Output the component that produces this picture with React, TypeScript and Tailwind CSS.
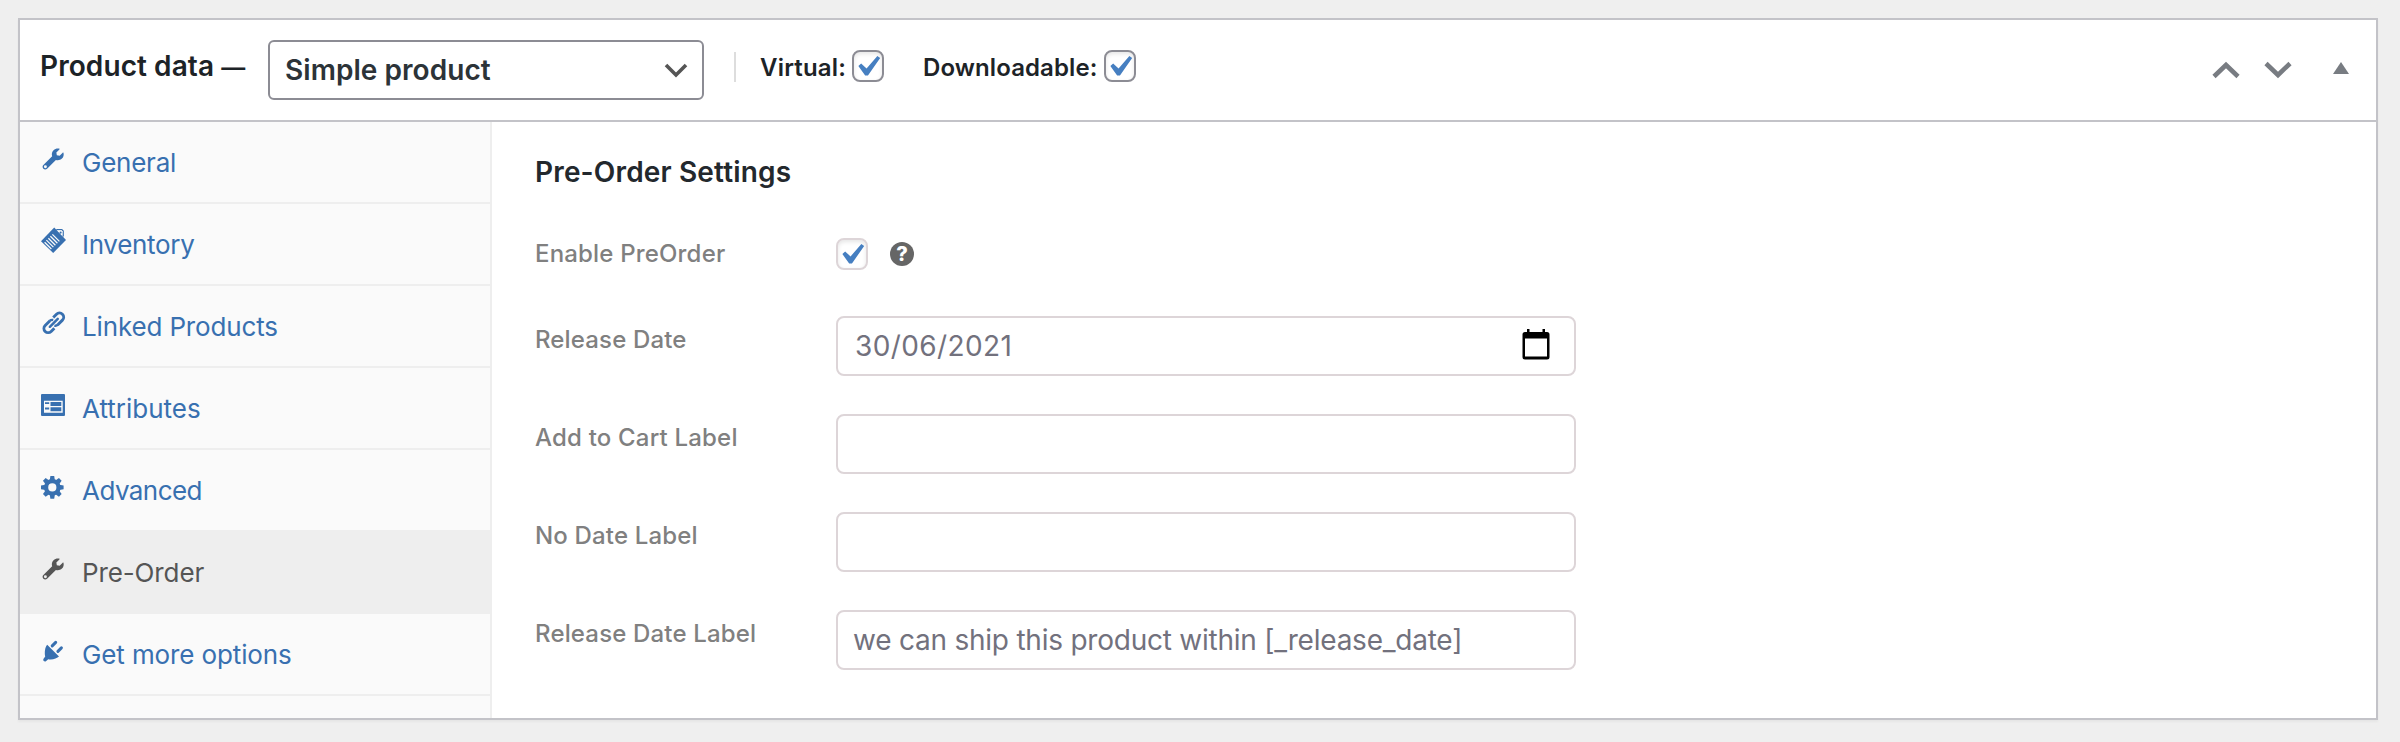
import type { ReactNode } from "react";

function WrenchIcon() {
  return (
    <svg width="30" height="30" viewBox="0 0 30 30" fill="currentColor">
      <path
        fillRule="evenodd"
        transform="translate(2.6 4.4) scale(0.0412)"
        d="M507.73 109.1c-2.24-9.03-13.54-12.09-20.12-5.51l-74.36 74.36-67.88-11.31-11.31-67.88 74.36-74.36c6.62-6.62 3.43-17.9-5.66-20.16-47.38-11.74-99.55.91-136.58 37.93-39.64 39.64-50.55 97.1-34.05 147.2L18.74 402.76c-24.99 24.99-24.99 65.51 0 90.5 24.99 24.99 65.51 24.99 90.5 0l213.21-213.21c50.12 16.71 107.47 5.68 147.37-34.22 37.07-37.07 49.7-89.32 37.91-136.73zM68 480a36 36 0 1 1 0-72 36 36 0 0 1 0 72z"
      />
    </svg>
  );
}

function InventoryIcon() {
  return (
    <svg width="30" height="30" viewBox="0 0 30 30">
      <path d="M14.2 1.6 L26 13.9 L13.2 27 L1 15.2 Z" fill="currentColor" />
      <path d="M16.3 3.6 L21.8 3.6 L23.2 5 L23.2 10.6" fill="none" stroke="currentColor" strokeWidth="1.3" />
      <path d="M17.2 4.6 L21.6 4.6 L22.3 5.3 L22.3 9.6 Z" fill="#fafafa" />
      <circle cx="20.6" cy="6.6" r="1.1" fill="currentColor" />
      <path
        d="M12.4 8.4 L19.4 15.4 M10.4 10.3 L17.4 17.3 M8.4 12.2 L15.4 19.2 M6.4 14.1 L13.4 21.1 M4.6 16.2 L11.4 23"
        stroke="#fafafa"
        strokeWidth="1.25"
      />
    </svg>
  );
}

function LinkIcon() {
  return (
    <svg width="30" height="30" viewBox="0 0 30 30" fill="none" stroke="currentColor" strokeWidth="2.9">
      <g transform="translate(13.8 14.8) rotate(-45)">
        <path d="M-1.2 -4.2 H-8 A4.2 4.2 0 0 0 -8 4.2 H-3.4" />
        <path d="M1.2 4.2 H8 A4.2 4.2 0 0 0 8 -4.2 H3.4" />
        <path d="M-1.6 -4.2 C0.2 -4.2 1 -3.4 1.6 -2.4 M1.6 4.2 C-0.2 4.2 -1 3.4 -1.6 2.4" strokeWidth="2.4" />
        <path d="M-5.6 0 H5.6" strokeWidth="2.5" strokeLinecap="round" />
      </g>
    </svg>
  );
}

function AttributesIcon() {
  return (
    <svg width="30" height="30" viewBox="0 0 30 30" fill="currentColor">
      <path fillRule="evenodd" d="M2 4h22a1 1 0 0 1 1 1v20a1 1 0 0 1-1 1H2a1 1 0 0 1-1-1V5a1 1 0 0 1 1-1zM4 10.7v12h18.7v-12z" />
      <path d="M5 12.3h4.2v1.8H5zM5 17.6h4.2v1.8H5zM10.5 12h10.8v4H10.5zM10.5 17.3h10.8v4H10.5z" />
    </svg>
  );
}

function GearIcon() {
  return (
    <svg width="30" height="30" viewBox="0 0 30 30">
      <circle cx="12.3" cy="15.4" r="6.2" fill="none" stroke="currentColor" strokeWidth="4.2" />
      <g fill="currentColor" transform="translate(12.3 15.4)">
        {[0, 45, 90, 135, 180, 225, 270, 315].map((a) => (
          <path key={a} transform={`rotate(${a})`} d="M-2.6 -7 L-1.9 -11.3 H1.9 L2.6 -7 Z" />
        ))}
      </g>
    </svg>
  );
}

function PlugIcon() {
  return (
    <svg width="30" height="30" viewBox="0 0 30 30" fill="currentColor">
      <path d="M7.2 8.8 L19 20.6 C17 22.6 12 24.2 8.2 23.2 L5.9 25.3 C4.3 26 2.7 24.5 3.4 22.9 L5.2 20.6 C4.4 16.5 5 11 7.2 8.8 Z" />
      <path d="M12.2 9.9 L15.7 6.4 M17.9 15.4 L21.4 11.9" stroke="currentColor" strokeWidth="3" strokeLinecap="round" />
    </svg>
  );
}

function Tab({ icon, label, active, spacing }: { icon: ReactNode; label: string; active?: boolean; spacing: string }) {
  return (
    <li className={`h-[82px] border-b-2 border-[#eeeeee] ${active ? "bg-[#eeeeee] text-[#555555]" : "text-[#3870b0]"}`}>
      <a className="flex h-full items-start gap-3 pl-5">
        <span className="mt-[22px] block shrink-0">{icon}</span>
        <span className={`whitespace-nowrap text-[26px] leading-[82px] ${spacing}`}>{label}</span>
      </a>
    </li>
  );
}

function Checkbox({ light }: { light?: boolean }) {
  return (
    <span
      className={`block size-8 shrink-0 rounded-lg border-2 bg-white shadow-[inset_0_2px_4px_rgba(0,0,0,0.1)] ${light ? "border-[#ddd5d8]" : "border-[#8c8c94]"}`}
    >
      <svg width="28" height="28" viewBox="3.71 3 13.33 13.33" fill="#467fc1">
        <path d="M14.83 4.89l1.34.94-5.81 8.38H9.02L5.78 9.67l1.34-1.25 2.57 2.4z" />
      </svg>
    </span>
  );
}

function Field({ label, spacing, children }: { label: string; spacing: string; children?: ReactNode }) {
  return (
    <div className="flex h-[60px] items-start">
      <label className={`w-[301px] shrink-0 text-2xl leading-[48px] font-medium text-[#808080] ${spacing}`}>{label}</label>
      <div className="flex h-[60px] w-[740px] items-center rounded-lg border-2 border-[#ddd5d8] bg-white px-[15px] text-[28px] text-[#72717d]">
        {children}
      </div>
    </div>
  );
}

export default function App() {
  return (
    <div className="h-[742px] w-[2400px] bg-[#efefef] pl-[18px] pt-[18px] font-[Inter,'Liberation_Sans',sans-serif]">
      <div className="flex h-[702px] w-[2360px] flex-col border-2 border-[#c3c3c8] bg-white shadow-[0_2px_2px_rgba(0,0,0,0.04)]">
        <header className="flex h-[102px] shrink-0 items-start border-b-2 border-[#c3c3c8] text-[#1d2327]">
          <h2 className="ml-5 mt-5 w-[228px] whitespace-nowrap text-[28px] leading-[52px] font-semibold tracking-[0.08px]">
            Product data <span className="text-2xl">—</span>
          </h2>
          <div className="mt-5 flex h-[60px] w-[436px] items-center justify-between rounded-md border-2 border-[#8c8c94] pl-[15px] pr-[14px] text-[28px] font-semibold tracking-[0.05px] text-[#2c3338]">
            Simple product
            <svg width="24" height="16" viewBox="0 0 24 16" fill="none" stroke="#555555" strokeWidth="3.6">
              <path d="M2 3 L12 13 L22 3" />
            </svg>
          </div>
          <div className="ml-[30px] mt-8 h-[30px] w-0.5 bg-[#dddddd]" />
          <label className="ml-6 mt-[30px] flex h-8 w-[124px] items-center justify-between text-2xl font-semibold tracking-[0.2px]">
            <span className="pt-[3px]">Virtual:</span>
            <Checkbox />
          </label>
          <label className="ml-[39px] mt-[30px] flex h-8 w-[213px] items-center justify-between text-2xl font-semibold tracking-[0.1px]">
            <span className="pt-[3px]">Downloadable:</span>
            <Checkbox />
          </label>
          <div className="ml-auto mr-[27px] mt-10 flex text-[#787c82]">
            <svg width="28" height="20" viewBox="0 0 28 20" fill="none" stroke="currentColor" strokeWidth="4.6">
              <path d="M2 16.5 L14 5 L26 16.5" />
            </svg>
            <svg className="ml-6" width="28" height="20" viewBox="0 0 28 20" fill="none" stroke="currentColor" strokeWidth="4.6">
              <path d="M2 3.5 L14 15 L26 3.5" />
            </svg>
            <svg className="ml-[41px]" width="16" height="20" viewBox="0 0 16 20" fill="currentColor">
              <path d="M8 2 L16 14 H0 Z" />
            </svg>
          </div>
        </header>
        <div className="flex min-h-0 flex-1">
          <ul className="w-[472px] shrink-0 border-r-2 border-[#eeeeee] bg-[#fafafa]">
            <Tab icon={<WrenchIcon />} label="General" spacing="tracking-[-0.24px]" />
            <Tab icon={<InventoryIcon />} label="Inventory" spacing="tracking-[-0.3px]" />
            <Tab icon={<LinkIcon />} label="Linked Products" spacing="tracking-[-0.15px]" />
            <Tab icon={<AttributesIcon />} label="Attributes" spacing="tracking-[0px]" />
            <Tab icon={<GearIcon />} label="Advanced" spacing="tracking-[-0.55px]" />
            <Tab icon={<WrenchIcon />} label="Pre-Order" spacing="tracking-[-0.12px]" active />
            <Tab icon={<PlugIcon />} label="Get more options" spacing="tracking-[-0.12px]" />
          </ul>
          <main className="pl-[43px] pt-[30px]">
            <h3 className="text-[28px] leading-10 font-semibold tracking-[0.16px] text-[#23282d]">Pre-Order Settings</h3>
            <div className="mt-[46px] flex h-8 items-center">
              <label className="w-[301px] text-2xl font-medium tracking-[0.18px] text-[#808080]">Enable PreOrder</label>
              <Checkbox light />
              <span className="mt-[-1px] ml-[22px] flex size-6 items-center justify-center rounded-full bg-[#666666] text-xl leading-6 font-extrabold text-white">
                ?
              </span>
            </div>
            <div className="mt-[46px] flex flex-col gap-[38px]">
              <Field label="Release Date" spacing="tracking-[0.15px]">
                <span className="ml-0.5 tracking-[0.38px]">30/06/2021</span>
                <svg className="ml-auto mr-[9px] mt-[-4px]" width="28" height="31" viewBox="0 0 28 31">
                  <path
                    fillRule="evenodd"
                    d="M5 0h2.5v3h13V0H23v3h2a2.5 2.5 0 0 1 2.5 2.5v22.5a2.5 2.5 0 0 1-2.5 2.5H3A2.5 2.5 0 0 1 .5 28V5.5A2.5 2.5 0 0 1 3 3h2zM3 9.5V27.5h22V9.5z"
                  />
                </svg>
              </Field>
              <Field label="Add to Cart Label" spacing="tracking-[0.19px]" />
              <Field label="No Date Label" spacing="tracking-[0.17px]" />
              <Field label="Release Date Label" spacing="tracking-[0.16px]">
                <span className="whitespace-nowrap tracking-[-0.23px]">we can ship this product within [_release_date]</span>
              </Field>
            </div>
          </main>
        </div>
      </div>
    </div>
  );
}
